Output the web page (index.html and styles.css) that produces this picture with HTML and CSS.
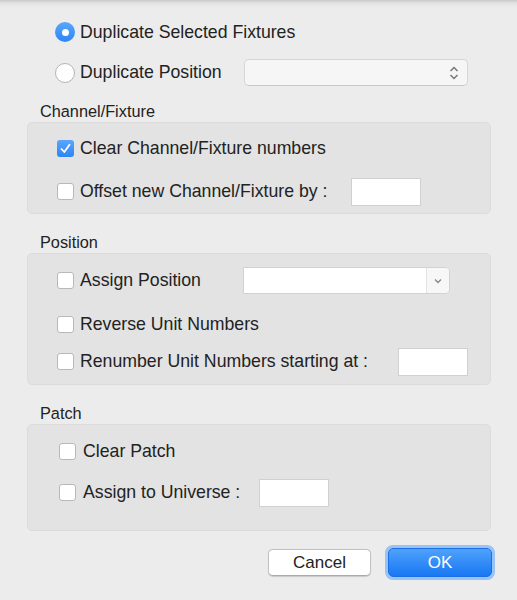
FILE: index.html
```html
<!DOCTYPE html>
<html lang="en">
<head>
  <meta charset="UTF-8">
  <title>Duplicate Fixtures</title>
  <link rel="stylesheet" href="styles.css">
</head>
<body>
  <div class="dialog">
    <div class="radio-group">
      <div class="row row-first">
        <span class="radio checked"></span>
        <span class="label">Duplicate Selected Fixtures</span>
      </div>
      <div class="row row-second">
        <span class="radio"></span>
        <span class="label w-dup">Duplicate Position</span>
        <div class="popup">
          <svg width="10" height="16" viewBox="0 0 10 16">
            <path d="M1.5 6 L5 2.5 L8.5 6 M1.5 10 L5 13.5 L8.5 10" fill="none" stroke="#777" stroke-width="1.5"/>
          </svg>
        </div>
      </div>
    </div>

    <!-- Channel/Fixture -->
    <div class="section-title">Channel/Fixture</div>
    <div class="group group-channel">
      <div class="row">
        <span class="check checked">
          <svg width="17" height="17" viewBox="0 0 17 17">
            <path d="M4.5 9 L7.3 12 L12.5 4.8" fill="none" stroke="#fff" stroke-width="1.8" stroke-linecap="round" stroke-linejoin="round"/>
          </svg>
        </span>
        <span class="label">Clear Channel/Fixture numbers</span>
      </div>
      <div class="row gap-16">
        <span class="check"></span>
        <span class="label w-offset">Offset new Channel/Fixture by :</span>
        <input class="field" type="text">
      </div>
    </div>

    <!-- Position -->
    <div class="section-title">Position</div>
    <div class="group group-position">
      <div class="row">
        <span class="check"></span>
        <span class="label w-assign">Assign Position</span>
        <div class="combo">
          <div class="combo-btn">
            <svg width="10" height="8" viewBox="0 0 10 8">
              <path d="M2 2.5 L5 5.5 L8 2.5" fill="none" stroke="#888" stroke-width="1.4"/>
            </svg>
          </div>
        </div>
      </div>
      <div class="row gap-17">
        <span class="check"></span>
        <span class="label">Reverse Unit Numbers</span>
      </div>
      <div class="row gap-10">
        <span class="check"></span>
        <span class="label w-renumber">Renumber Unit Numbers starting at :</span>
        <input class="field" type="text">
      </div>
    </div>

    <!-- Patch -->
    <div class="section-title">Patch</div>
    <div class="group group-patch">
      <div class="row">
        <span class="check"></span>
        <span class="label">Clear Patch</span>
      </div>
      <div class="row gap-14">
        <span class="check"></span>
        <span class="label w-universe">Assign to Universe :</span>
        <input class="field" type="text">
      </div>
    </div>

    <div class="buttons">
      <button class="btn">Cancel</button>
      <button class="btn btn-default">OK</button>
    </div>
  </div>
</body>
</html>
```

FILE: styles.css
```css
/* Basic styling */
body {
  margin: 0;
  padding: 0;
  height: 600px;
  overflow: hidden;
  font-family: "Liberation Sans", Arial, sans-serif;
  color: #222;
  background: linear-gradient(to bottom, #c9c9c9 0, #e2e2e2 3px, #ececec 7px) no-repeat, #ececec;
}

.dialog {
  padding: 20px 26px 0 27px;
}

/* Rows */
.row {
  display: flex;
  align-items: center;
  height: 27px;
}

.label {
  font-size: 17.7px;
  white-space: nowrap;
  flex-shrink: 0;
}

.w-dup { width: 164px; }
.w-offset { width: 271px; }
.w-assign { width: 163px; }
.w-renumber { width: 318px; }
.w-universe { width: 176px; }

.gap-10 { margin-top: 10px; }
.gap-14 { margin-top: 14px; }
.gap-16 { margin-top: 16px; }
.gap-17 { margin-top: 17px; }

/* Radios */
.radio-group {
  padding-left: 28px;
}

.row-first {
  height: 24px;
}

.row-second {
  margin-top: 15px;
}

.radio {
  width: 20px;
  height: 20px;
  box-sizing: border-box;
  border-radius: 50%;
  border: 1px solid #b4b4b4;
  background: #fff;
  margin-right: 5px;
  flex-shrink: 0;
  position: relative;
}

.radio.checked {
  border: none;
  background: linear-gradient(#5aa6fb, #2c86f5);
}

.radio.checked::after {
  content: "";
  position: absolute;
  left: 6.5px;
  top: 6.5px;
  width: 7px;
  height: 7px;
  border-radius: 50%;
  background: #fff;
}

.popup {
  width: 224px;
  height: 27px;
  box-sizing: border-box;
  border: 1px solid #d6d6d6;
  border-bottom-color: #c8c8c8;
  border-radius: 5px;
  background: #f6f6f6;
  display: flex;
  align-items: center;
  justify-content: flex-end;
  padding-right: 8px;
}

/* Section groups */
.section-title {
  font-size: 16.3px;
  line-height: 18px;
  margin: 0 0 2px 13px;
}

.radio-group + .section-title {
  margin-top: 16px;
}

.group {
  background: #e3e3e3;
  border: 1px solid #dcdcdc;
  border-radius: 5px;
  padding-left: 29px;
  margin-bottom: 19px;
}

.group-channel {
  padding-top: 12px;
  height: 78px;
}

.group-position {
  padding-top: 13px;
  height: 117px;
}

.group-patch {
  padding-top: 13px;
  padding-left: 31px;
  height: 92px;
  margin-bottom: 0;
}

.group-patch .check {
  margin-right: 7px;
}

/* Checkboxes */
.check {
  width: 17px;
  height: 17px;
  box-sizing: border-box;
  border: 1px solid #b8b8b8;
  border-radius: 3px;
  background: #fff;
  margin-right: 6px;
  flex-shrink: 0;
}

.check svg {
  display: block;
}

.check.checked {
  border: none;
  background: linear-gradient(#5aa6fb, #2c86f5);
}

/* Inputs */
.field {
  width: 70px;
  height: 28px;
  box-sizing: border-box;
  border: 1px solid #d0d0d0;
  background: #fff;
  margin: 0;
  padding: 0;
  outline: none;
}

.combo {
  width: 207px;
  height: 27px;
  box-sizing: border-box;
  border: 1px solid #d2d2d2;
  border-radius: 0 5px 5px 0;
  background: #fff;
  display: flex;
  justify-content: flex-end;
}

.combo-btn {
  width: 22px;
  border-left: 1px solid #e4e4e4;
  background: #f7f7f7;
  border-radius: 0 4px 4px 0;
  display: flex;
  align-items: center;
  justify-content: center;
}

/* Buttons */
.buttons {
  display: flex;
  justify-content: flex-end;
  align-items: center;
  gap: 17px;
  margin-right: -1px;
  margin-top: 17px;
}

.btn {
  font-family: "Liberation Sans", Arial, sans-serif;
  font-size: 17px;
  color: #222;
  height: 27px;
  width: 103px;
  padding: 0;
  border: 1px solid #c2c2c2;
  border-bottom-color: #aaa;
  border-radius: 5px;
  background: #fff;
  box-shadow: 0 0.5px 1px rgba(0, 0, 0, 0.15);
}

.btn-default {
  width: 104px;
  height: 29px;
  color: #fff;
  border: 1px solid #1a6fe6;
  background: linear-gradient(#4fa2fc, #1877f2);
  box-shadow: 0 0 0 3px #98c3f7;
}
```
